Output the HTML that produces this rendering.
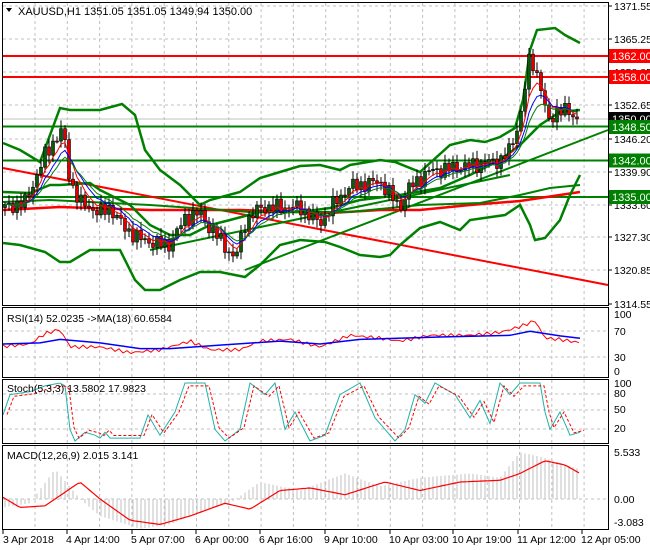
<!DOCTYPE html>
<html><head><meta charset="utf-8"><style>
html,body{margin:0;padding:0;background:#fff;width:650px;height:550px;overflow:hidden}
svg{display:block;font-family:"Liberation Sans",sans-serif;font-size:10.5px}
</style></head><body>
<svg id="c" width="650" height="550" xmlns="http://www.w3.org/2000/svg">
<rect width="650" height="550" fill="#fff"/>
<g id="grid"></g>
<g id="main"></g>
<g id="panels"></g>
<g fill="none" stroke="#000" stroke-width="1">
<rect x="2.5" y="2.5" width="606" height="303"/>
<rect x="2.5" y="307.5" width="606" height="70"/>
<rect x="2.5" y="379.5" width="606" height="64"/>
<rect x="2.5" y="445.5" width="606" height="84"/>
</g>
<g id="labels" fill="#000"></g>
<text x="18" y="15" font-size="11">XAUUSD,H1  1351.05 1351.05 1349.94 1350.00</text>
<polygon points="6,8 12,8 9,12" fill="#000"/>
<text x="7" y="322">RSI(14) 52.0235  -&gt;MA(18) 60.6584</text>
<text x="7" y="392">Stoch(5,3,3) 13.5802 17.9823</text>
<text x="7" y="459">MACD(12,26,9) 2.015 3.141</text>
</svg>
<script>
var NS="http://www.w3.org/2000/svg";
function el(p,t,a,txt){var e=document.createElementNS(NS,t);for(var k in a)e.setAttribute(k,a[k]);if(txt!=null)e.textContent=txt;p.appendChild(e);return e;}
function interp(k,x){if(x<=k[0][0])return k[0][1];for(var i=1;i<k.length;i++){if(x<=k[i][0]){var a=k[i-1],b=k[i];return a[1]+(b[1]-a[1])*(x-a[0])/(b[0]-a[0]);}}return k[k.length-1][1];}
function pts(a){return a.map(function(p){return p[0]+","+p[1]}).join(" ");}
var G=document.getElementById("grid"),M=document.getElementById("main"),P=document.getElementById("panels"),L=document.getElementById("labels");
function py(p){return 6+(1371.55-p)*5.228;}
var ticks=[3,67,132,196,260,325,390,453,518,582];
for(var x=35;x<608;x+=32.3){
 [[3,305],[308,377],[380,443],[446,529]].forEach(function(r){el(G,"line",{x1:x,x2:x,y1:r[0],y2:r[1],stroke:"#c0c0c0","stroke-dasharray":"3,3"});});
}
var axis=[["1371.55",6],["1365.25",39],["1358.85",72],["1352.65",105],["1346.20",139],["1339.90",172],["1333.60",205],["1327.30",237],["1320.85",270],["1314.55",304]];
axis.forEach(function(a){if(a[1]>5&&a[1]<304)el(G,"line",{x1:3,x2:608,y1:a[1],y2:a[1],stroke:"#c0c0c0","stroke-dasharray":"3,3"});el(L,"line",{x1:608,x2:612,y1:a[1],y2:a[1],stroke:"#000"});el(L,"text",{x:614,y:a[1]+4},a[0]);});
[[331],[357]].forEach(function(a){el(G,"line",{x1:3,x2:608,y1:a[0],y2:a[0],stroke:"#c0c0c0","stroke-dasharray":"3,3"});});
[[394],[410],[429]].forEach(function(a){el(G,"line",{x1:3,x2:608,y1:a[0],y2:a[0],stroke:"#c0c0c0","stroke-dasharray":"3,3"});});
el(G,"line",{x1:3,x2:608,y1:499,y2:499,stroke:"#c0c0c0","stroke-dasharray":"3,3"});
[["100",318],["70",335],["30",361],["0",375],["100",387],["80",397],["50",413],["20",432],["5.533",456],["0.00",503],["-3.083",526]].forEach(function(a){el(L,"text",{x:614,y:a[1]},a[0]);});
var tl=["3 Apr 2018","4 Apr 14:00","5 Apr 07:00","6 Apr 00:00","6 Apr 16:00","9 Apr 10:00","10 Apr 03:00","10 Apr 19:00","11 Apr 12:00","12 Apr 05:00"];
ticks.forEach(function(t,i){el(L,"line",{x1:t,x2:t,y1:530,y2:534,stroke:"#000"});el(L,"text",{x:i==0?3:t-1,y:543},tl[i]);});
el(M,"line",{x1:3,x2:608,y1:119,y2:119,stroke:"#c0c0c0"});
[[56,"#f00"],[77,"#f00"],[126.5,"#008000"],[160.5,"#008000"],[197,"#008000"]].forEach(function(a){el(M,"line",{x1:3,x2:608,y1:a[0],y2:a[0],stroke:a[1],"stroke-width":2});});
el(M,"line",{x1:3,y1:168,x2:608,y2:285,stroke:"#f00","stroke-width":2});
el(M,"line",{x1:245,y1:270,x2:608,y2:130,stroke:"#008000","stroke-width":2});
el(M,"line",{x1:150,y1:250,x2:510,y2:175,stroke:"#008000","stroke-width":2});
el(M,"polyline",{points:pts([[3,210],[60,207],[150,210],[240,210],[330,213],[380,210],[420,210],[470,205],[520,201],[560,195],[580,192]]),fill:"none",stroke:"#f00","stroke-width":2.5});
el(M,"polyline",{points:pts([[3,202],[50,200],[150,205],[250,212],[350,212],[420,205],[480,203],[520,195],[550,188],[580,185]]),fill:"none",stroke:"#008000","stroke-width":2});
var up=[[3,143],[20,150],[40,162],[60,108],[70,110],[100,110],[122,104],[135,115],[145,150],[160,170],[180,185],[200,205],[210,200],[240,192],[260,178],[280,172],[300,166],[320,165],[340,170],[350,165],[380,160],[395,162],[420,172],[450,145],[470,140],[485,142],[500,137],[515,128],[523,100],[530,50],[537,30],[555,28],[565,35],[580,43]];
var lo=[[3,243],[20,245],[45,252],[60,262],[70,262],[90,250],[120,250],[135,280],[145,290],[160,290],[180,280],[200,272],[220,272],[245,277],[260,265],[280,245],[300,240],[325,242],[340,247],[360,255],[380,257],[390,255],[400,245],[420,228],[440,222],[460,230],[470,220],[505,215],[520,205],[530,225],[535,240],[545,238],[560,220],[570,195],[580,175]];
var mid=[[3,192],[30,193],[50,185],[60,185],[90,183],[100,190],[130,205],[150,225],[170,235],[190,235],[210,225],[230,220],[260,212],[300,212],[330,208],[360,200],[400,195],[440,188],[470,175],[500,160],[520,145],[540,125],[560,112],[580,110]];
[up,lo,mid].forEach(function(a){el(M,"polyline",{points:pts(a),fill:"none",stroke:"#008000","stroke-width":2.5});});
var keys=[[5,1333],[25,1334],[30,1336],[45,1343],[55,1346],[63,1348],[70,1338],[80,1334],[100,1332],[110,1333],[125,1329],[140,1327],[160,1326],[170,1326],[185,1331],[200,1332],[210,1329],[220,1327],[235,1323],[245,1330],[260,1333],[275,1333],[300,1333],[320,1330],[335,1334],[350,1337],[380,1338],[400,1333],[410,1337],[430,1340],[470,1341],[500,1342],[510,1344],[520,1350],[530,1362],[540,1357],[548,1349],[558,1352],[570,1351],[578,1350]];
var prev=1333,closes=[],xs=[];
for(var i=0;i<144;i++){var x=5+i*4;var c=interp(keys,x)+Math.sin(i*2.7)*1.1+Math.cos(i*1.3)*0.6;var o=prev;var h=Math.max(o,c)+0.4+Math.abs(Math.sin(i*1.9))*1.2;var l=Math.min(o,c)-0.4-Math.abs(Math.cos(i*2.3))*1.2;
 el(M,"line",{x1:x,x2:x,y1:py(h),y2:py(l),stroke:"#000"});
 var bt=py(Math.max(o,c)),bb=py(Math.min(o,c));
 el(M,"rect",{x:x-1.5,y:bt,width:3,height:Math.max(1,bb-bt),fill:c>=o?"#0a5a0a":"#e00000",stroke:"#000","stroke-width":0.6});
 closes.push(c);xs.push(x);prev=c;}
function ema(a,n){var k=2/(n+1),r=[],v=a[0];a.forEach(function(x){v=v+(x-v)*k;r.push(v);});return r;}
[[5,"#f00"],[8,"#00f"],[11,"#008000"]].forEach(function(m){var e=ema(closes,m[0]);el(M,"polyline",{points:xs.map(function(x,i){return x+","+py(e[i]).toFixed(1)}).join(" "),fill:"none",stroke:m[1],"stroke-width":1});});
function box(y,t,bg,fg){el(L,"rect",{x:609,y:y-7,width:41,height:14,fill:bg});el(L,"text",{x:612,y:y+4,fill:fg||"#fff","font-size":"11"},t);}
box(56,"1362.00","#f00");box(77,"1358.00","#f00");box(119,"1350.00","#000");box(127,"1348.50","#008000");box(160.5,"1342.00","#008000");box(197,"1335.00","#008000");
var rsiR=[[3,46],[30,50],[45,68],[60,75],[70,45],[100,45],[130,35],[160,40],[190,55],[210,40],[240,40],[260,55],[290,58],[320,45],[350,65],[380,60],[400,55],[430,65],[470,65],[500,70],[520,80],[535,90],[545,60],[560,58],[580,52]];
var rsiB=[[3,50],[40,52],[60,58],[100,52],[140,42],[170,42],[220,48],[280,55],[320,50],[360,58],[440,62],[510,65],[530,72],[560,64],[580,60]];
var ry=function(v){return 373-0.58*v;};
var rr=[];for(var x=3;x<=580;x+=4){rr.push([x,ry(interp(rsiR,x)+Math.sin(x*0.7)*3).toFixed(1)]);}
el(P,"polyline",{points:pts(rr),fill:"none",stroke:"#f00"});
el(P,"polyline",{points:pts(rsiB.map(function(p){return [p[0],ry(p[1])]})),fill:"none",stroke:"#00f","stroke-width":1.5});
var st=[[3,45],[10,80],[30,85],[45,95],[60,100],[65,95],[70,20],[75,0],[85,15],[95,10],[100,5],[105,15],[110,5],[140,5],[148,45],[160,10],[175,50],[185,100],[205,100],[215,20],[225,0],[240,20],[250,100],[265,80],[275,100],[285,20],[295,50],[310,0],[325,10],[340,80],[360,100],[375,40],[395,0],[405,20],[415,80],[425,65],[435,100],[455,80],[470,40],[480,70],[490,30],[500,100],[510,80],[520,100],[540,100],[545,50],[550,20],[560,50],[570,10],[580,15]];
var sy=function(v){return 441-0.58*v;};
el(P,"polyline",{points:pts(st.map(function(p){return [p[0],sy(p[1])]})),fill:"none",stroke:"#20b2aa"});
el(P,"polyline",{points:pts(st.map(function(p){return [p[0]+4,sy(p[1]*0.9+5)]})),fill:"none",stroke:"#f00","stroke-dasharray":"3,2"});
var my=function(v){return 499-8.5*v;};
var hk=[[3,-1],[30,-0.5],[55,3.5],[80,0],[100,-2],[140,-3.5],[170,-3],[200,-1.5],[230,-0.5],[260,2],[300,1],[345,3],[380,1.5],[420,2.5],[470,3],[500,2.5],[520,5.5],[540,5],[580,3.5]];
for(var x=5;x<=578;x+=4){var v=interp(hk,x);el(P,"line",{x1:x,x2:x,y1:499,y2:my(v),stroke:"#c0c0c0"});}
var sk=[[3,0.2],[20,-1.0],[45,-0.8],[80,2.0],[100,0],[130,-2.5],[160,-3.0],[190,-2.0],[225,-0.5],[250,-1.2],[280,1.0],[310,1.3],[345,0.5],[385,2.0],[420,1.0],[460,2.0],[500,2.2],[520,3.0],[545,4.5],[565,4.0],[580,3.0]];
var sl=[];for(var x=3;x<=580;x+=3)sl.push([x,my(interp(sk,x)).toFixed(1)]);
el(P,"polyline",{points:pts(sl),fill:"none",stroke:"#f00","stroke-width":1.2});
</script>
</body></html>
